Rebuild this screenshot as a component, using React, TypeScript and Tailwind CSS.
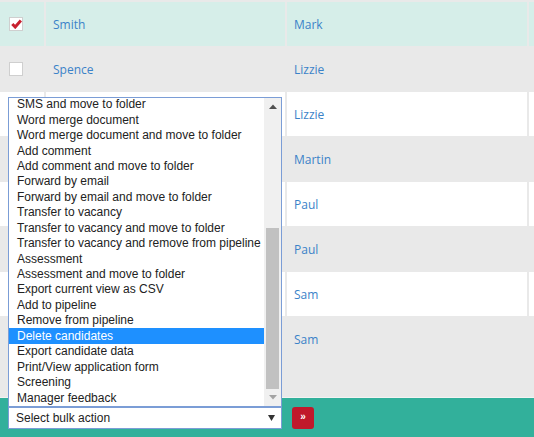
import React from 'react';

const rows = [
  { last: 'Smith', first: 'Mark', bg: 'bg-[#d6eee9]', checked: true },
  { last: 'Spence', first: 'Lizzie', bg: 'bg-[#e9e9e9]' },
  { last: '', first: 'Lizzie', bg: 'bg-white' },
  { last: '', first: 'Martin', bg: 'bg-[#e9e9e9]' },
  { last: '', first: 'Paul', bg: 'bg-white' },
  { last: '', first: 'Paul', bg: 'bg-[#e9e9e9]' },
  { last: '', first: 'Sam', bg: 'bg-white' },
  { last: '', first: 'Sam', bg: 'bg-[#e9e9e9]' },
];

const actions = [
  'SMS and move to folder',
  'Word merge document',
  'Word merge document and move to folder',
  'Add comment',
  'Add comment and move to folder',
  'Forward by email',
  'Forward by email and move to folder',
  'Transfer to vacancy',
  'Transfer to vacancy and move to folder',
  'Transfer to vacancy and remove from pipeline',
  'Assessment',
  'Assessment and move to folder',
  'Export current view as CSV',
  'Add to pipeline',
  'Remove from pipeline',
  'Delete candidates',
  'Export candidate data',
  'Print/View application form',
  'Screening',
  'Manager feedback',
];

function Checkbox({ checked }: { checked?: boolean }) {
  return (
    <div className="w-[14px] h-[14px] bg-white border border-[#cfcfcf] flex items-center justify-center">
      {checked && (
        <svg width="11" height="10" viewBox="0 0 11 10">
          <path d="M1.3 5 L4.2 8 L9.9 1.6" fill="none" stroke="#c8202f" strokeWidth="3" strokeLinejoin="miter" />
        </svg>
      )}
    </div>
  );
}

export default function App() {
  return (
    <div className="w-[534px] h-[437px] flex flex-col bg-[#e9e9e9] overflow-hidden font-['Open_Sans',sans-serif]">
      <div className="flex-1 pt-px">
        {rows.map((r, i) => (
          <div key={i} className={`flex h-[45px] border-t border-[#e9e9e9] ${r.bg}`}>
            <div className="w-[44px] flex items-center pl-[9px]">
              <Checkbox checked={r.checked} />
            </div>
            <div className="w-[241px] border-l-2 border-[#e9e9e9] flex items-center pl-[7px] pt-[2px] text-[12px] text-[#3b82c8]">
              {r.last}
            </div>
            <div className="w-[242px] border-l-2 border-[#e9e9e9] flex items-center pl-[7px] pt-[2px] text-[12px] text-[#3b82c8]">
              {r.first}
            </div>
            <div className="flex-1 border-l-2 border-[#e9e9e9]" />
          </div>
        ))}
      </div>
      <div className="h-[40px] border-t border-[#f3f3f3] bg-[#32b09b] flex items-center pl-[8px] gap-[10px] font-['Liberation_Sans',Arial,sans-serif]">
        <div className="relative w-[274px]">
          <div className="absolute left-0 bottom-full w-[274px] h-[310px] border border-[#7b9dd6] bg-white flex">
            <div className="flex-1 overflow-hidden">
              <div className="-mt-[1px]">
                {actions.map((a) => (
                  <div
                    key={a}
                    className={`h-[15.45px] flex items-center pl-[8px] text-[12px] whitespace-nowrap ${
                      a === 'Delete candidates' ? 'bg-[#1e90ff] text-white' : 'text-[#222]'
                    }`}
                  >
                    {a}
                  </div>
                ))}
              </div>
            </div>
            <div className="w-[17px] bg-[#f0f0f0] flex flex-col">
              <div className="h-[17px] flex items-center justify-center">
                <svg width="8" height="5" viewBox="0 0 8 5">
                  <path d="M0 5 L4 0.5 L8 5 Z" fill="#505050" />
                </svg>
              </div>
              <div className="h-[113px]" />
              <div className="h-[161px] mx-[2px] bg-[#c1c1c1]" />
              <div className="h-[17px] flex items-center justify-center">
                <svg width="8" height="5" viewBox="0 0 8 5">
                  <path d="M0 0 L4 4.5 L8 0 Z" fill="#a3a3a3" />
                </svg>
              </div>
            </div>
          </div>
          <div className="h-[22px] border border-[#7b9dd6] bg-white flex items-center justify-between pl-[7px] pr-[6px] text-[12px] text-[#222]">
            <span>Select bulk action</span>
            <svg width="7" height="6" viewBox="0 0 7 6">
              <path d="M0 0 L7 0 L3.5 6 Z" fill="#333" />
            </svg>
          </div>
        </div>
        <button className="w-[22px] h-[22px] rounded-[3px] bg-[#c0192b] text-white text-[10px] font-bold leading-none flex items-center justify-center pb-px">
          »
        </button>
      </div>
    </div>
  );
}
